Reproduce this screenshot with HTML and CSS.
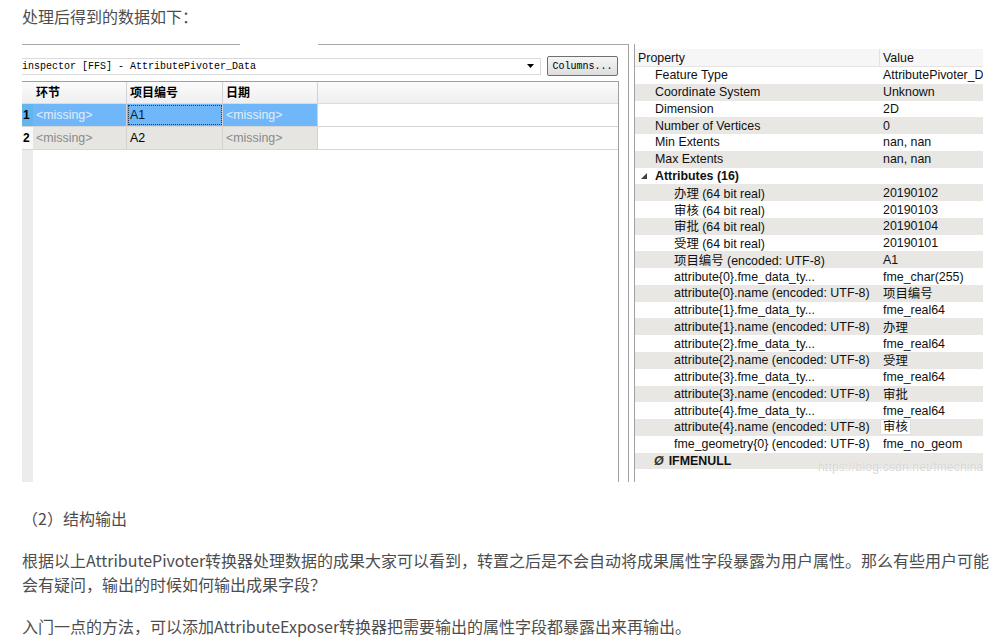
FILE: index.html
```html
<!DOCTYPE html>
<html lang="zh-CN">
<head>
<meta charset="utf-8">
<title>AttributePivoter</title>
<link rel="stylesheet" href="styles.css">
</head>
<body>
<div class="page">
  <p class="lead">处理后得到的数据如下：</p>

  <div class="shot">
    <div class="inspector">
      <div class="topline"><span class="seg1"></span><span class="seg2"></span></div>
      <div class="toolbar">
        <div class="combo">
          <span>inspector [FFS] - AttributePivoter_Data</span>
          <svg class="arrow" width="7" height="4" viewBox="0 0 7 4"><polygon points="0,0 7,0 3.5,4" fill="#000"/></svg>
        </div>
        <div class="cols">Columns...</div>
      </div>
      <div class="grid">
        <div class="grow head">
          <div class="gut"></div>
          <div class="cell c1">环节</div>
          <div class="cell c2">项目编号</div>
          <div class="cell c3">日期</div>
          <div class="rest"></div>
        </div>
        <div class="grow sel">
          <div class="gut">1</div>
          <div class="cell c1 miss">&lt;missing&gt;</div>
          <div class="cell c2 focus">A1</div>
          <div class="cell c3 miss">&lt;missing&gt;</div>
          <div class="rest"></div>
        </div>
        <div class="grow norm">
          <div class="gut">2</div>
          <div class="cell c1 miss">&lt;missing&gt;</div>
          <div class="cell c2">A2</div>
          <div class="cell c3 miss">&lt;missing&gt;</div>
          <div class="rest"></div>
        </div>
        <div class="filler"><div class="gut"></div></div>
      </div>
    </div>

    <div class="props">
      <div class="phead"><div class="k">Property</div><div class="v">Value</div></div>
      <div class="prow"><div class="k">Feature Type</div><div class="v">AttributePivoter_Data</div></div>
      <div class="prow alt"><div class="k">Coordinate System</div><div class="v">Unknown</div></div>
      <div class="prow"><div class="k">Dimension</div><div class="v">2D</div></div>
      <div class="prow alt"><div class="k">Number of Vertices</div><div class="v">0</div></div>
      <div class="prow"><div class="k">Min Extents</div><div class="v">nan, nan</div></div>
      <div class="prow alt"><div class="k">Max Extents</div><div class="v">nan, nan</div></div>
      <div class="prow"><div class="k group"><svg class="tri" width="6" height="6" viewBox="0 0 6 6"><polygon points="6,0 6,6 0,6" fill="#404040"/></svg><b>Attributes (16)</b></div><div class="v"></div></div>
      <div class="prow alt"><div class="k sub">办理 (64 bit real)</div><div class="v">20190102</div></div>
      <div class="prow"><div class="k sub">审核 (64 bit real)</div><div class="v">20190103</div></div>
      <div class="prow alt"><div class="k sub">审批 (64 bit real)</div><div class="v">20190104</div></div>
      <div class="prow"><div class="k sub">受理 (64 bit real)</div><div class="v">20190101</div></div>
      <div class="prow alt"><div class="k sub">项目编号 (encoded: UTF-8)</div><div class="v">A1</div></div>
      <div class="prow"><div class="k sub">attribute{0}.fme_data_ty...</div><div class="v">fme_char(255)</div></div>
      <div class="prow alt"><div class="k sub">attribute{0}.name (encoded: UTF-8)</div><div class="v">项目编号</div></div>
      <div class="prow"><div class="k sub">attribute{1}.fme_data_ty...</div><div class="v">fme_real64</div></div>
      <div class="prow alt"><div class="k sub">attribute{1}.name (encoded: UTF-8)</div><div class="v">办理</div></div>
      <div class="prow"><div class="k sub">attribute{2}.fme_data_ty...</div><div class="v">fme_real64</div></div>
      <div class="prow alt"><div class="k sub">attribute{2}.name (encoded: UTF-8)</div><div class="v">受理</div></div>
      <div class="prow"><div class="k sub">attribute{3}.fme_data_ty...</div><div class="v">fme_real64</div></div>
      <div class="prow alt"><div class="k sub">attribute{3}.name (encoded: UTF-8)</div><div class="v">审批</div></div>
      <div class="prow"><div class="k sub">attribute{4}.fme_data_ty...</div><div class="v">fme_real64</div></div>
      <div class="prow alt"><div class="k sub">attribute{4}.name (encoded: UTF-8)</div><div class="v"><span class="hover">审核</span></div></div>
      <div class="prow"><div class="k sub">fme_geometry{0} (encoded: UTF-8)</div><div class="v">fme_no_geom</div></div>
      <div class="prow alt"><div class="k"><b class="null">Ø</b><b>IFMENULL</b></div><div class="v"></div></div>
    </div>

    <div class="watermark">https://blog.csdn.net/fmechina</div>
  </div>

  <p class="sec">（2）结构输出</p>
  <p class="para">根据以上AttributePivoter转换器处理数据的成果大家可以看到，转置之后是不会自动将成果属性字段暴露为用户属性。那么有些用户可能会有疑问，输出的时候如何输出成果字段？</p>
  <p class="para2">入门一点的方法，可以添加AttributeExposer转换器把需要输出的属性字段都暴露出来再输出。</p>
</div>
</body>
</html>
```

FILE: styles.css
```css
* { box-sizing: border-box; }

body {
  margin: 0;
  background: #fff;
  font-family: "Noto Sans CJK SC", "Noto Sans", sans-serif;
  color: #4d4d4d;
}

.page {
  padding-left: 22px;
  width: 983px;
}

.lead {
  margin: 4px 0 0;
  font-size: 16px;
  line-height: 24px;
}

.sec {
  margin: 24px 0 0;
  font-size: 16px;
  line-height: 24px;
}

.para {
  margin: 18px 0 0;
  width: 968px;
  font-size: 16px;
  line-height: 24px;
}

.para2 {
  margin: 18px 0 0;
  font-size: 16px;
  line-height: 24px;
}

/* embedded screenshot */
.shot {
  margin-top: 16px;
  display: flex;
  width: 961px;
  height: 438px;
  position: relative;
  font-family: "Liberation Sans", "Noto Sans CJK SC", sans-serif;
  font-size: 12.4px;
  color: #111;
}

.inspector {
  width: 607px;
  border-right: 1px solid #a0a0a0;
  display: flex;
  flex-direction: column;
}

.topline {
  display: flex;
  height: 1px;
}
.seg1 { width: 218px; background: #a8a8a8; }
.seg2 { margin-left: 78px; flex: 1; background: #a8a8a8; }

.toolbar {
  display: flex;
  align-items: center;
  margin-top: 11px;
  height: 20px;
}

.combo {
  width: 519px;
  height: 17px;
  border: 1px solid #dadada;
  border-left: none;
  display: flex;
  align-items: center;
  justify-content: space-between;
  padding-right: 6px;
  font-family: "Liberation Mono", monospace;
  font-size: 10px;
  color: #000;
  background: #fff;
}

.cols {
  margin-left: 6px;
  width: 71px;
  height: 20px;
  border: 1px solid #707070;
  border-radius: 2px;
  background: linear-gradient(#f5f5f5, #dedede);
  font-family: "Liberation Mono", monospace;
  font-size: 10px;
  color: #000;
  display: flex;
  align-items: center;
  justify-content: center;
}

.grid {
  margin-top: 5px;
  flex: 1;
  width: 597px;
  border-top: 1px solid #a0a0a0;
  border-right: 1px solid #a0a0a0;
  display: flex;
  flex-direction: column;
}

.grow {
  display: flex;
  height: 23px;
  border-bottom: 1px solid #d6d6d6;
}
.grow.head {
  height: 22px;
  background: linear-gradient(#fbfbfb, #efefef);
  border-bottom: 1px solid #dcdcdc;
}

.gut {
  width: 11px;
  flex: none;
  background: #ececec;
  font-weight: bold;
  font-size: 12px;
  line-height: 22px;
  padding-left: 1px;
  color: #000;
}

.cell {
  flex: none;
  border-right: 1px solid #d2d2d2;
  padding-left: 3px;
  line-height: 22px;
  white-space: nowrap;
}
.c1 { width: 94px; }
.c2 { width: 96px; }
.c3 { width: 95px; }
.rest { flex: 1; }

.head .cell {
  font-weight: bold;
  color: #000;
  font-size: 12px;
}
.head .gut { background: transparent; }

.sel .cell { background: #70b7fa; color: #0c1a2a; }
.sel .gut { background: #62b5ee; }
.sel .miss { color: #e2eefa; }
.sel .focus {
  outline: 1px dotted #2a3a4a;
  outline-offset: -2px;
}

.norm .cell { background: #e7e5e2; color: #000; }
.norm .gut { background: #fafafa; }
.norm .miss { color: #8a8a8a; }

.filler {
  flex: 1;
  display: flex;
}

/* property panel */
.props {
  margin-left: 5px;
  flex: 1;
  border-left: 1px solid #a0a0a0;
  display: flex;
  flex-direction: column;
  overflow: hidden;
}

.phead {
  margin-top: 5px;
  height: 18px;
  display: flex;
  align-items: center;
  background: #f6f6f6;
  border-bottom: 1px solid #e4e4e4;
  color: #111;
}
.phead .k {
  width: 245px;
  padding-left: 3px;
  border-right: 1px solid #e2e2e2;
  height: 100%;
  display: flex;
  align-items: center;
}
.phead .v { padding-left: 3px; }

.prow {
  height: 16.78px;
  display: flex;
  align-items: center;
  background: #fff;
}
.prow.alt { background: #e8e7e3; }

.prow .k {
  width: 245px;
  flex: none;
  padding-left: 20px;
  white-space: nowrap;
  overflow: hidden;
  display: flex;
  align-items: center;
}
.prow .k.sub { padding-left: 39px; }
.prow .k.group { padding-left: 6px; }
.prow .v {
  padding-left: 3px;
  white-space: nowrap;
  overflow: hidden;
}

.tri { margin-right: 8px; }

.null {
  font-style: italic;
  margin-left: -1px;
  margin-right: 5px;
  color: #333;
}

.hover {
  display: inline-block;
  background: #fff;
  border: 1px solid #e0e0e0;
  padding: 0 2px;
  margin-left: -3px;
  line-height: 14px;
}

.watermark {
  position: absolute;
  left: 796px;
  top: 416px;
  font-size: 12px;
  color: #d6d6d6;
  text-shadow: 0 0 1px #fff;
  letter-spacing: 0.2px;
}
```
